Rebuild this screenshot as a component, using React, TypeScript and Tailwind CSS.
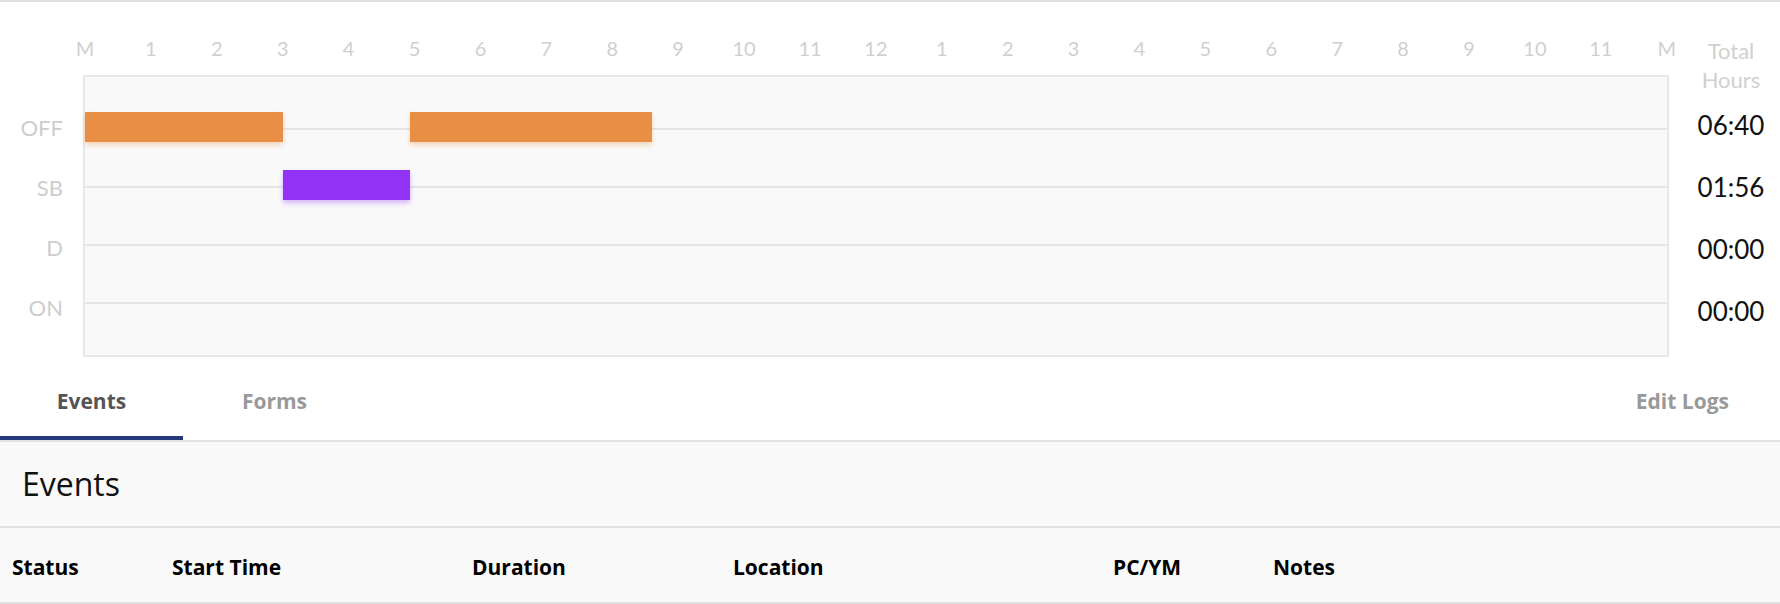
import React from 'react';

const HOURS = ['M', '1', '2', '3', '4', '5', '6', '7', '8', '9', '10', '11', '12', '1', '2', '3', '4', '5', '6', '7', '8', '9', '10', '11', 'M'];

const ROWS = [
  { key: 'OFF', total: '06:40' },
  { key: 'SB', total: '01:56' },
  { key: 'D', total: '00:00' },
  { key: 'ON', total: '00:00' },
];

// start / end in hours from midnight
const SEGMENTS = [
  { row: 'OFF', start: 0, end: 3 },
  { row: 'SB', start: 3, end: 4 + 56 / 60 },
  { row: 'OFF', start: 4 + 56 / 60, end: 8 + 36 / 60 },
];

const barColors: Record<string, string> = {
  OFF: 'bg-[#e98f45] shadow-[0_3px_5px_rgba(233,143,69,0.35)]',
  SB: 'bg-[#9232f4] shadow-[0_3px_5px_rgba(146,50,244,0.35)]',
  D: 'bg-[#3aa655]',
  ON: 'bg-[#2f6fd6]',
};

const columns = ['Status', 'Start Time', 'Duration', 'Location', 'PC/YM', 'Notes'];

const LogChart = () => (
  <div className="flex pt-[32px] pb-[3px] font-['Lato',sans-serif]">
    {/* row labels */}
    <div className="w-[83px] shrink-0 pt-[63px] pr-[20px] text-right text-[22px] text-[#cdcdcd]">
      {ROWS.map((r) => (
        <div key={r.key} className="h-[60px] flex items-center justify-end">
          {r.key}
        </div>
      ))}
    </div>

    {/* grid */}
    <div className="flex-1">
      <div className="mx-[2px] h-[28px] mb-[13px] flex justify-between text-[20px] leading-[28px] text-[#cfcfcf]">
        {HOURS.map((h, i) => (
          <div key={i} className="w-0 flex justify-center whitespace-nowrap">
            {h}
          </div>
        ))}
      </div>
      <div className="h-[282px] border-2 border-[#e8e8e8] bg-[#f9f9f9] pt-[23px]">
        {ROWS.map((r) => (
          <div key={r.key} className="relative h-[58px]">
            <div className="h-[30px] border-b-2 border-[#e4e4e4]" />
            {SEGMENTS.filter((s) => s.row === r.key).map((s, i) => (
              <div
                key={i}
                className={`absolute top-[12px] h-[30px] ${barColors[r.key]}`}
                style={{ left: `${(s.start / 24) * 100}%`, width: `${((s.end - s.start) / 24) * 100}%` }}
              />
            ))}
          </div>
        ))}
      </div>
    </div>

    {/* totals */}
    <div className="w-[111px] shrink-0 pl-[13px] pt-[2px] text-center">
      <div className="text-[22px] leading-[29px] text-[#d0d0d0]">
        Total
        <br />
        Hours
      </div>
      {ROWS.map((r) => (
        <div key={r.key} className="h-[62px] flex items-center justify-center text-[26px] text-[#111]">
          {r.total}
        </div>
      ))}
    </div>
  </div>
);

export default function App() {
  return (
    <div
      className="w-full min-h-screen bg-white border-t-2 border-[#dedede]"
      style={{ fontFamily: '"Open Sans", "Noto Sans", sans-serif' }}
    >
      <LogChart />

      {/* Tabs */}
      <div className="h-[82px] flex items-stretch border-b-2 border-[#e3e3e3] text-[21px] font-bold">
        <div className="w-[183px] flex items-center justify-center pt-[8px] border-b-4 border-[#25397a] text-[#555]">
          Events
        </div>
        <div className="w-[183px] flex items-center justify-center pt-[8px] border-b-4 border-transparent text-[#999]">
          Forms
        </div>
        <div className="ml-auto pr-[51px] flex items-center pt-[8px] border-b-4 border-transparent text-[#999]">
          Edit Logs
        </div>
      </div>

      {/* Events */}
      <div className="bg-[#f9f9f9]">
        <div className="h-[86px] flex items-center px-[22px] border-b-2 border-[#e2e2e2] text-[32px] text-[#111]">
          Events
        </div>
        <div className="h-[76px] pt-[6px] grid grid-cols-[160px_300px_261px_380px_160px_1fr] items-center pl-[12px] border-b-2 border-[#e2e2e2] text-[21px] font-bold text-black">
          {columns.map((c) => (
            <div key={c}>{c}</div>
          ))}
        </div>
      </div>
    </div>
  );
}
